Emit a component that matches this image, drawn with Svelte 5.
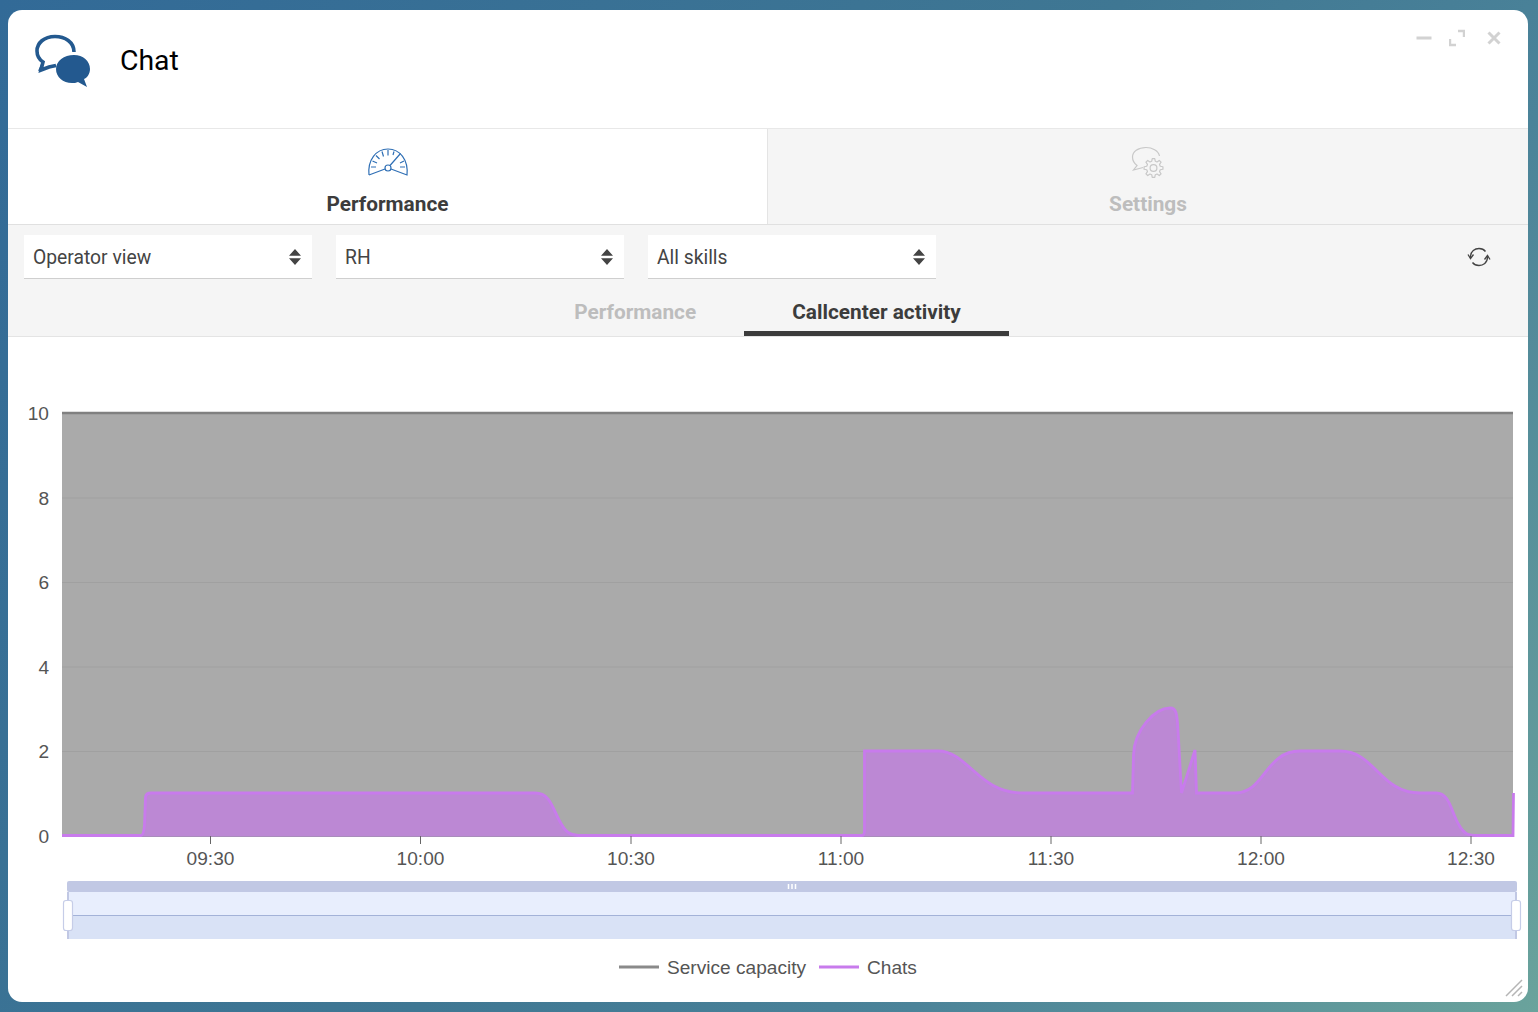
<script lang="ts">
// chart geometry is in page pixels, the svg viewBox is offset to match
const plotLeft = 62;
const plotRight = 1513;
const plotTop = 413;
const plotBottom = 836;

const filters = ['Operator view', 'RH', 'All skills'];
const yTicks = [
	{ label: '10', y: 413 },
	{ label: '8', y: 498 },
	{ label: '6', y: 582.5 },
	{ label: '4', y: 667 },
	{ label: '2', y: 751.5 },
	{ label: '0', y: 836 },
];
const xTicks = [
	{ label: '09:30', x: 210.5 },
	{ label: '10:00', x: 420.5 },
	{ label: '10:30', x: 631 },
	{ label: '11:00', x: 841 },
	{ label: '11:30', x: 1051 },
	{ label: '12:00', x: 1261 },
	{ label: '12:30', x: 1471 },
];

const chatsLine =
	'M62 835.5 L141 835.5 Q143.5 835.5 144.5 825 L145.5 797 Q146 793 151 793 L535 793 C552 793 553 812 562 825 C567 834 572 835.5 582 835.5 ' +
	'L862 835.5 Q864.5 835.5 864.5 830 L864.5 751 L938 751 C968 751 978 793 1023 793 L1132.5 793 L1133.5 755 C1134 730 1155 708 1170 708 ' +
	'C1176 708 1177 712 1178 730 L1181.5 793 L1195 750 L1196.5 793 L1235 793 C1265 793 1265 751 1300 751 L1340 751 C1375 751 1380 793 1420 793 ' +
	'L1436 793 C1450 793 1451 812 1459 825 C1464 834 1468 835.5 1478 835.5 L1513 835.5 L1513.5 793';
const chatsArea = chatsLine + ` L1513.5 ${plotBottom} L${plotLeft} ${plotBottom} Z`;

// small cog for the settings tab icon
function gearPath(cx: number, cy: number, outer: number, inner: number, teeth: number) {
	const pts: string[] = [];
	const step = (Math.PI * 2) / teeth;
	for (let i = 0; i < teeth; i++) {
		const a = i * step;
		const corners: [number, number][] = [
			[inner, a - step * 0.32],
			[outer, a - step * 0.17],
			[outer, a + step * 0.17],
			[inner, a + step * 0.32],
		];
		for (const [r, t] of corners) {
			pts.push(`${(cx + r * Math.cos(t)).toFixed(2)} ${(cy + r * Math.sin(t)).toFixed(2)}`);
		}
	}
	return 'M' + pts.join('L') + 'Z';
}
</script>

<div class="desktop">
	<div class="window">
		<header class="titlebar">
			<svg class="logo" viewBox="0 0 56 54" width="56" height="54" aria-hidden="true">
				<path d="M40 18 C40 8 31 2.5 21 2.5 C10 2.5 3 9 3 17 C3 22 6 26 9 28 L7 36 L15 33 L22 31.5" fill="none" stroke="#23598f" stroke-width="3.6" />
				<path d="M7 36 L4 37 L7 30 Z" fill="#23598f" />
				<path d="M42 21 C51 21 58 27 58 35 C58 40 55 44 52 45 L55 53 L46 48 C44 49 42 49 40 49 C31 49 24 43 24 35 C24 27 32 21 42 21 Z" fill="#23598f" transform="translate(-2 0)" />
			</svg>
			<h1>Chat</h1>
			<div class="win-controls">
				<svg class="min" width="16" height="16" viewBox="0 0 16 16"><path d="M0.5 8h15" stroke="#d2d2d2" stroke-width="3" /></svg>
				<svg width="16" height="18" viewBox="0 0 16 18"><path d="M9 2h6v6M1 10v6h6" fill="none" stroke="#d2d2d2" stroke-width="2.4" /></svg>
				<svg class="close" width="14" height="14" viewBox="0 0 14 14"><path d="M1.5 1.5l11 11M12.5 1.5l-11 11" stroke="#d2d2d2" stroke-width="3" /></svg>
			</div>
		</header>

		<nav class="main-tabs">
			<div class="main-tab active">
				<svg width="42" height="32" viewBox="0 0 42 32" fill="none" stroke="#2f6fb5" stroke-width="1.2" aria-hidden="true">
					<path d="M2 29 C0.5 14 9 3 21 3 C33 3 41.5 14 40 29 L24 23 M18 23 L2 29" />
					<circle cx="21" cy="22" r="3" />
					<path d="M23 19.5 L33.5 7.5 M4 21h5M5.5 15l4.5 2M9 9.5l3.5 3.5M15 5.5l1.5 5M21 4v5.5M27 5.5l-1 3.5M37 15l-4 2M38 21h-5" />
				</svg>
				<span>Performance</span>
			</div>
			<div class="main-tab">
				<svg width="36" height="32" viewBox="0 0 36 32" fill="none" stroke="#c8c8c8" stroke-width="1.2" aria-hidden="true">
					<path d="M29.5 10 C28.5 4.500 22 1.500 16 1.500 C8 1.500 2.500 5.500 2.500 11 C2.500 15 5 18 7 19.500 L3.500 24 L13 21.500" />
					<path d={gearPath(23.5, 22, 9.5, 7, 8)} stroke-linejoin="round" />
					<circle cx="23.5" cy="22" r="3.4" />
				</svg>
				<span>Settings</span>
			</div>
		</nav>

		<section class="toolbar">
			<div class="filters">
				{#each filters as filter}
					<div class="select">
						<span>{filter}</span>
						<svg width="12" height="16" viewBox="0 0 12 16" aria-hidden="true">
							<path d="M6 0l6 6.8H0zM6 16L0 9.2h12z" fill="#444" />
						</svg>
					</div>
				{/each}
				<button class="refresh" aria-label="Refresh">
					<svg width="24" height="22" viewBox="0 0 24 22" fill="none" stroke="#444" stroke-width="1.3">
						<path d="M3.5 11 C3.5 5 8 2.5 12 2.5 C15 2.5 17 3.5 18.5 5.5" />
						<path d="M20.5 11 C20.5 17 16 19.5 12 19.5 C9 19.5 7 18.5 5.5 16.5" />
						<path d="M1 8.5 L3.5 12.5 L6.5 8.5 M17.5 13.5 L20.5 9.5 L23 13.5" />
					</svg>
				</button>
			</div>
			<div class="sub-tabs">
				<div class="sub-tab">Performance</div>
				<div class="sub-tab active">Callcenter activity</div>
			</div>
		</section>

		<section class="chart">
			<svg viewBox="8 337 1520 665" width="1520" height="665">
				<rect x={plotLeft} y={plotTop} width={plotRight - plotLeft} height={plotBottom - plotTop} fill="#aaaaaa" />
				{#each yTicks as tick}
					<line x1={plotLeft} x2={plotRight} y1={tick.y} y2={tick.y} stroke="#a0a0a0" stroke-width="1" />
					<text class="axis" x="49" y={tick.y + 6.5} text-anchor="end">{tick.label}</text>
				{/each}
				<line x1={plotLeft} x2={plotRight} y1={plotTop} y2={plotTop} stroke="#808080" stroke-width="2.6" />
				<path d={chatsArea} fill="#bc88d4" />
				<line x1={plotLeft} x2={plotRight} y1="836.5" y2="836.5" stroke="#a88dbb" stroke-width="1" />
				<path d={chatsLine} fill="none" stroke="#c87bec" stroke-width="2.8" />
				{#each xTicks as tick}
					<line x1={tick.x} x2={tick.x} y1="836" y2="844" stroke="#666" stroke-width="1" />
					<text class="axis" x={tick.x} y="865" text-anchor="middle">{tick.label}</text>
				{/each}

				<!-- range navigator -->
				<rect x="67" y="881" width="1450" height="11" rx="2" fill="#c1c8e4" />
				<rect x="67" y="892" width="1450" height="23" fill="#e8eefd" />
				<rect x="67" y="915" width="1450" height="24" fill="#d9e2f6" />
				<line x1="67" x2="1517" y1="915.5" y2="915.5" stroke="#a3b2d8" />
				<line x1="68" x2="68" y1="892" y2="939" stroke="#c1c8e4" stroke-width="2" />
				<line x1="1516" x2="1516" y1="892" y2="939" stroke="#c1c8e4" stroke-width="2" />
				<path d="M788.5 884v5M792 884v5M795.500 884v5" stroke="#fff" stroke-width="1.5" />
				<rect x="63.500" y="900.500" width="9" height="30" rx="2.500" fill="#fff" stroke="#c6cde8" stroke-width="1.2" />
				<rect x="1511.500" y="900.500" width="9" height="30" rx="2.500" fill="#fff" stroke="#c6cde8" stroke-width="1.2" />

				<!-- legend -->
				<line x1="619" x2="659" y1="967" y2="967" stroke="#8a8a8a" stroke-width="3" />
				<text class="axis" x="667" y="974">Service capacity</text>
				<line x1="819" x2="859" y1="967" y2="967" stroke="#c87bec" stroke-width="3" />
				<text class="axis" x="867" y="974">Chats</text>
			</svg>
			<svg class="grip" width="18" height="18" viewBox="0 0 18 18" aria-hidden="true">
				<path d="M1 17L17 1M7 17L17 7M13 17l4-4" stroke="#b5b5b5" stroke-width="1.5" />
			</svg>
		</section>
	</div>
</div>

<style>
	:global(body) {
		margin: 0;
		font-family: Roboto, "Liberation Sans", sans-serif;
	}
	.desktop {
		width: 1538px;
		height: 1012px;
		box-sizing: border-box;
		padding: 10px 10px 10px 8px;
		background: linear-gradient(125deg, #326a97 0%, #3f7793 50%, #4b8399 72%, #6aa39c 100%);
	}
	.window {
		height: 992px;
		background: #fff;
		border-radius: 14px;
		overflow: hidden;
		display: flex;
		flex-direction: column;
	}
	.titlebar {
		position: relative;
		height: 118px;
		flex: none;
		display: flex;
		align-items: flex-start;
		box-sizing: border-box;
		padding: 24px 0 0 26px;
	}
	.logo {
		flex: none;
	}
	h1 {
		margin: 9px 0 0 30px;
		font-size: 28.400px;
		line-height: 36px;
		font-weight: 400;
		color: #000;
	}
	.win-controls {
		position: absolute;
		top: 19px;
		right: 27px;
		display: flex;
		align-items: center;
		gap: 17px;
	}
	.close {
		margin-left: 5px;
	}
	.main-tabs {
		flex: none;
		height: 97px;
		display: grid;
		grid-template-columns: 760px 1fr;
		box-sizing: border-box;
		border-top: 1px solid #e8e8e8;
		border-bottom: 1px solid #e0e0e0;
	}
	.main-tab {
		display: flex;
		flex-direction: column;
		align-items: center;
		box-sizing: border-box;
		padding-top: 17px;
		background: #f5f5f5;
		color: #bdbdbd;
		font-size: 20.800px;
		font-weight: 700;
		line-height: 24px;
	}
	.main-tab svg {
		margin-bottom: 14px;
	}
	.main-tab.active {
		background: #fff;
		color: #3c3c3c;
		border-right: 1px solid #e4e4e4;
	}
	.toolbar {
		flex: none;
		height: 112px;
		box-sizing: border-box;
		background: #f5f5f5;
		border-bottom: 1px solid #e4e4e4;
	}
	.filters {
		display: flex;
		gap: 24px;
		padding: 10px 0 0 16px;
		align-items: flex-start;
	}
	.select {
		width: 288px;
		height: 44px;
		box-sizing: border-box;
		display: flex;
		align-items: center;
		justify-content: space-between;
		padding: 0 11px 0 9px;
		background: #fff;
		border-bottom: 1px solid #cfcfcf;
		font-size: 19.300px;
		color: #444;
	}
	.select span {
		padding-top: 1px;
	}
	.refresh {
		margin: 11px 37px 0 auto;
		padding: 0;
		border: 0;
		background: none;
		height: 22px;
	}
	.sub-tabs {
		display: flex;
		justify-content: center;
		margin-top: 13px;
		padding-right: 1px;
	}
	.sub-tab {
		height: 44px;
		box-sizing: border-box;
		padding: 8px 48px 0;
		font-size: 20.800px;
		font-weight: 700;
		line-height: 24px;
		color: #bdbdbd;
	}
	.sub-tab.active {
		color: #3c3c3c;
		border-bottom: 5px solid #3c3c3c;
	}
	.chart {
		position: relative;
		flex: 1;
	}
	.chart > svg:first-child {
		display: block;
	}
	.axis {
		font-family: "Liberation Sans", Arial, sans-serif;
		font-size: 19.100px;
		fill: #555;
	}
	.grip {
		position: absolute;
		right: 5px;
		bottom: 5px;
	}
</style>
